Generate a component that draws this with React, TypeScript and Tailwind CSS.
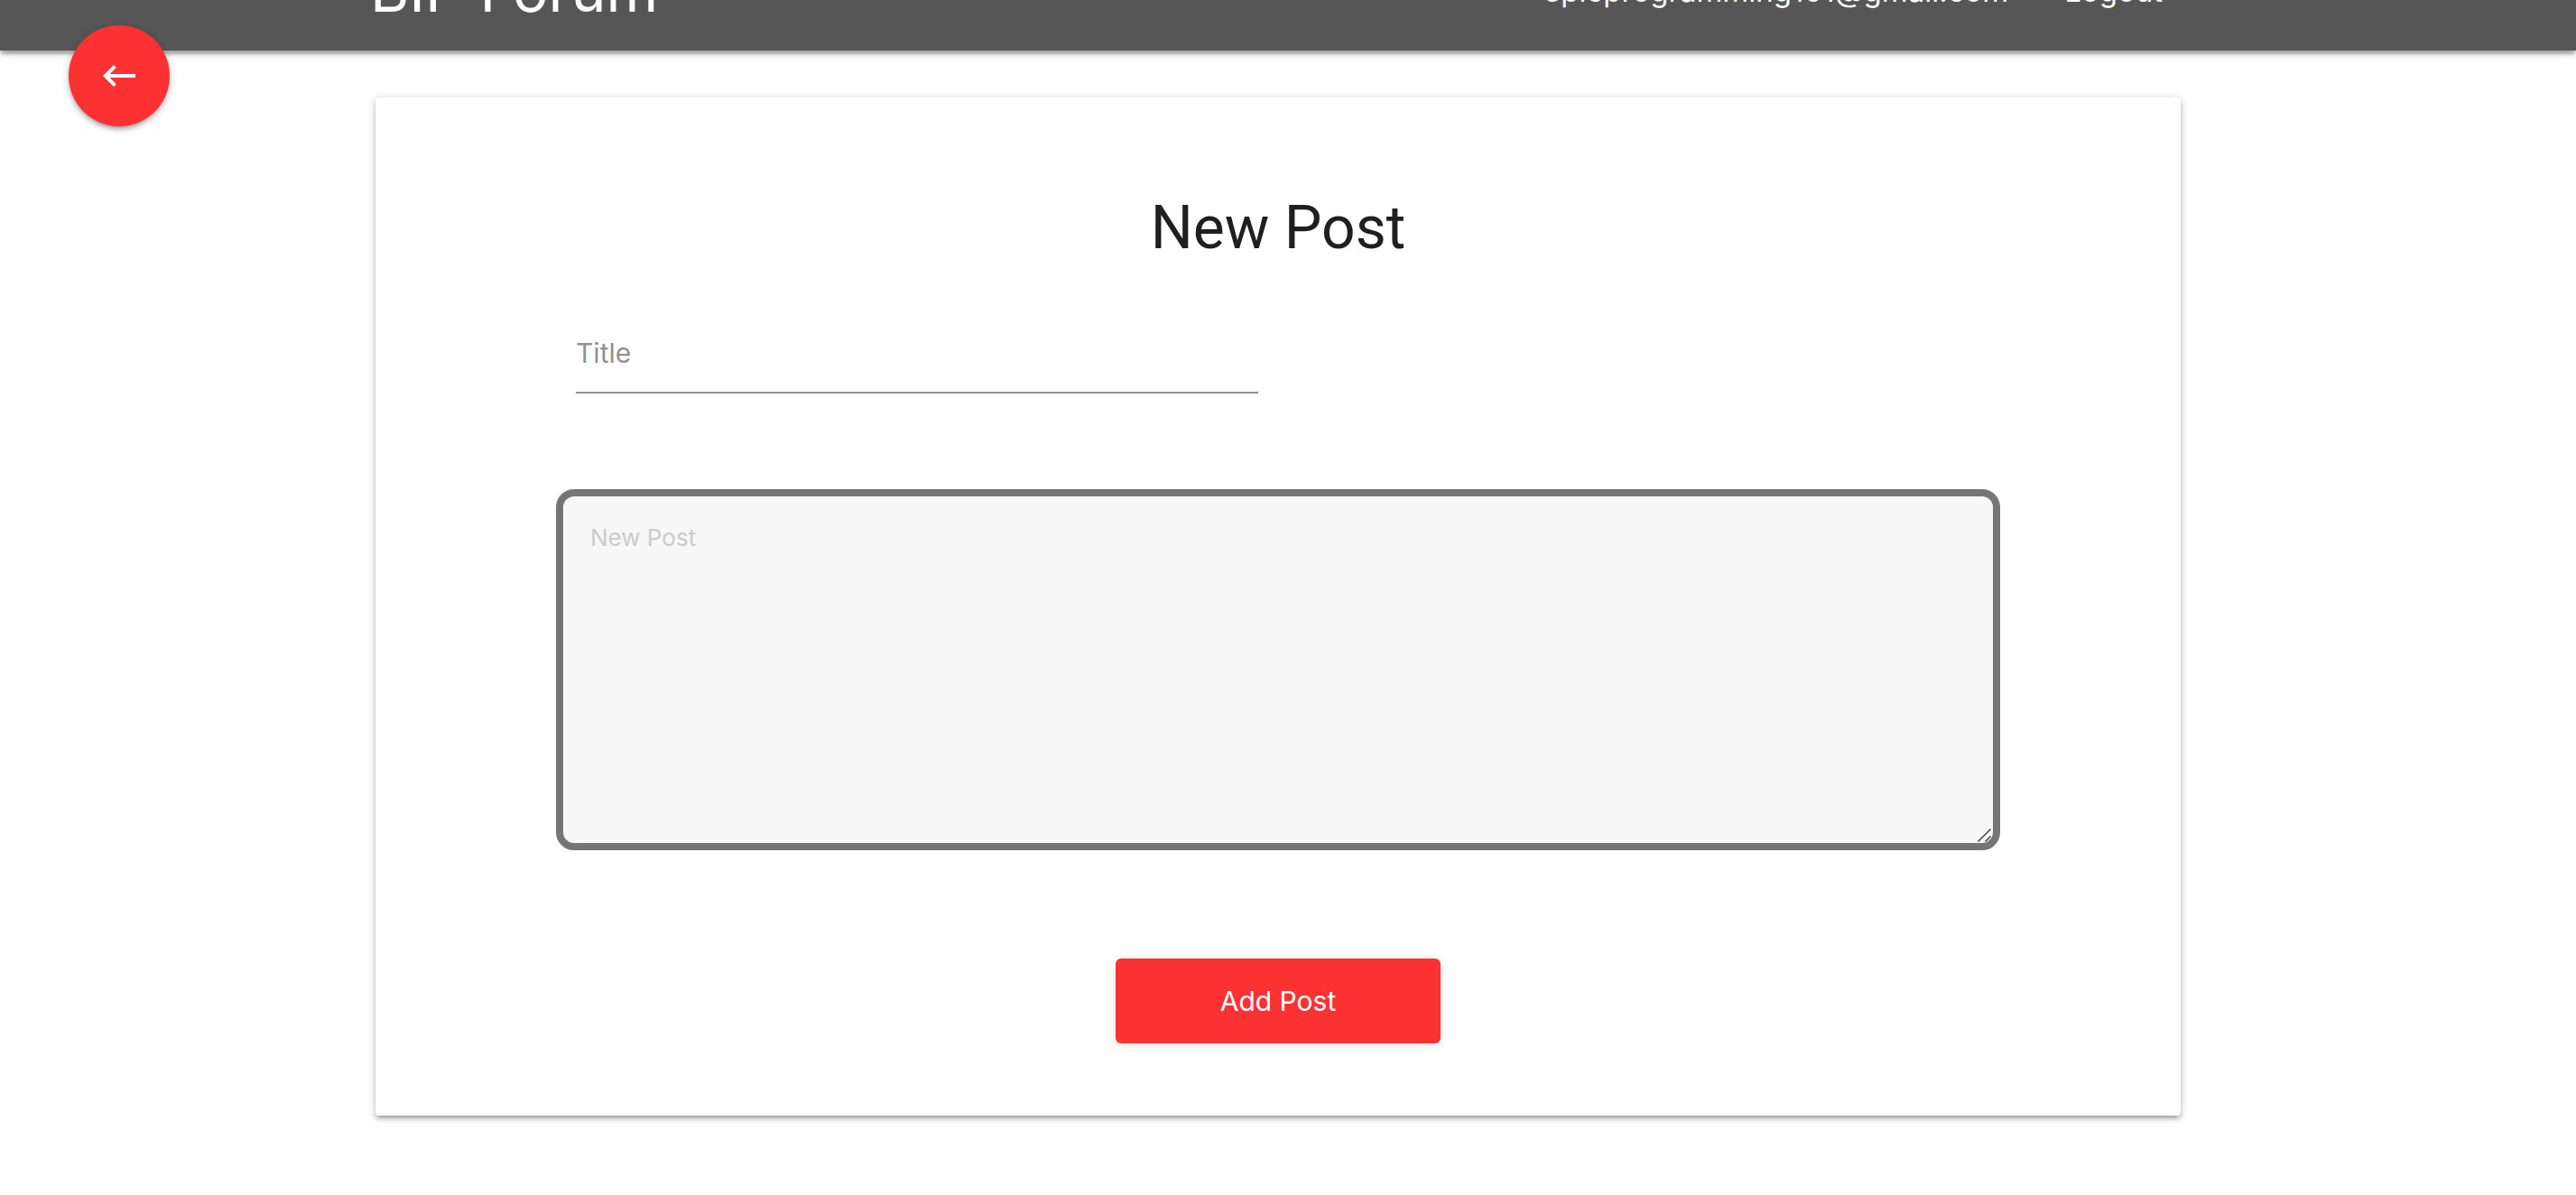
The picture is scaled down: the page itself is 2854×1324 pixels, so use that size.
import { useState } from "react";

function BackButton() {
  return (
    <button
      type="button"
      aria-label="Go back"
      className="fixed left-[76px] top-7 z-20 flex size-28 items-center justify-center rounded-full bg-[#fc3232] text-white shadow-[0_4px_4px_0_rgba(0,0,0,0.14),0_6px_2px_-4px_rgba(0,0,0,0.12),0_2px_10px_0_rgba(0,0,0,0.2)]"
    >
      <svg viewBox="0 0 24 24" className="size-12" fill="currentColor" aria-hidden="true">
        <path d="M21 11H6.83l3.58-3.59L9 6l-6 6 6 6 1.41-1.41L6.83 13H21z" />
      </svg>
    </button>
  );
}

function Header() {
  return (
    <header className="relative h-14 bg-[#565656] text-white shadow-[0_4px_4px_0_rgba(0,0,0,0.14),0_6px_2px_-2px_rgba(0,0,0,0.12),0_2px_10px_0_rgba(0,0,0,0.2)]">
      <div className="h-full overflow-hidden">
        <nav className="-mt-20 flex h-[138px] items-center justify-between pl-[410px] pr-[458px]">
          <a href="#" className="text-[66px] leading-[80px]">BIP Forum</a>
          <div className="flex items-center gap-[62px] pt-1 text-[33px]">
            <a href="#">epicprogramming101@gmail.com</a>
            <a href="#">Logout</a>
          </div>
        </nav>
      </div>
    </header>
  );
}

function PostBody() {
  const [body, setBody] = useState("");
  return (
    <div className="relative mt-[106px]">
      <textarea
        aria-label="New Post"
        placeholder="New Post"
        value={body}
        onChange={(e) => setBody(e.target.value)}
        className="block h-[400px] w-full resize-none rounded-[20px] border-8 border-[#757575] bg-[#f7f7f7] px-[30px] py-7 text-[26px] leading-[36px] outline-none placeholder:text-[#cbcbcb]"
      />
      <svg
        viewBox="0 0 16 16"
        className="pointer-events-none absolute bottom-2 right-2 size-4 overflow-visible"
        fill="none"
        stroke="#444"
        strokeWidth="1.5"
        aria-hidden="true"
      >
        <path d="M-.5 14.5L13.5.5M7.5 14.5L13.5 8.5" />
      </svg>
    </div>
  );
}

export default function App() {
  const [title, setTitle] = useState("");
  return (
    <div className="min-h-screen bg-[#fefefe] font-[Inter,sans-serif]">
      <BackButton />
      <Header />
      <main className="pb-20 pl-[416px] pr-[438px] pt-[52px]">
        <form
          onSubmit={(e) => e.preventDefault()}
          className="flex flex-col rounded bg-white px-[200px] pb-20 pt-[100px] shadow-[0_4px_4px_0_rgba(0,0,0,0.14),0_6px_2px_-4px_rgba(0,0,0,0.12),0_2px_10px_0_rgba(0,0,0,0.2)]"
        >
          <h1 className="text-center font-[Roboto,sans-serif] text-[66px] leading-[90px] text-[#1f1f1f]">New Post</h1>
          <input
            aria-label="Title"
            placeholder="Title"
            value={title}
            onChange={(e) => setTitle(e.target.value)}
            className="ml-[22px] mt-[50px] h-[88px] w-[756px] border-b-2 border-[#919191] text-[30px] outline-none placeholder:text-[#919191]"
          />
          <PostBody />
          <button
            type="submit"
            className="mx-auto mt-[120px] h-[94px] w-[360px] rounded-md bg-[#fc3232] text-[30px] text-white shadow-[0_2px_10px_0_rgba(0,0,0,0.12)]"
          >
            Add Post
          </button>
        </form>
      </main>
    </div>
  );
}
